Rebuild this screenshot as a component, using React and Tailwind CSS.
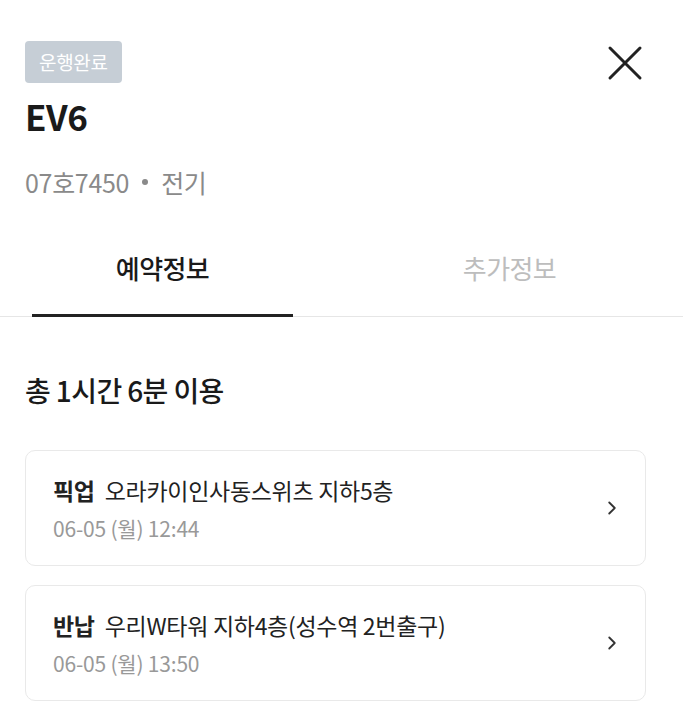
import { ChevronRight } from "lucide-react";

const font = { fontFamily: '"Noto Sans CJK KR", "Noto Sans", sans-serif' };

function PlaceCard({ label, place, time }) {
  return (
    <div className="flex items-center justify-between rounded-[10px] border border-[#e9e9e9] h-[116px] pl-[27px] pr-[22px]">
      <div className="flex flex-col">
        <div className="flex items-center text-[23px] leading-[30px] text-[#222] tracking-[-0.3px]">
          <span className="font-bold mr-[10px]">{label}</span>
          <span>{place}</span>
        </div>
        <div className="mt-[10px] text-[21px] leading-[26px] text-[#999] tracking-[-0.2px]">{time}</div>
      </div>
      <ChevronRight className="w-[22px] h-[22px] text-[#333]" strokeWidth={2} />
    </div>
  );
}

export default function App() {
  return (
    <div className="w-[683px] h-[721px] bg-white overflow-hidden" style={font}>
      {/* Header */}
      <div className="px-[25px] pt-[41px]">
        <div className="flex items-start justify-between">
          <span className="inline-flex items-center h-[42px] px-[14px] rounded-[4px] bg-[#c6ced6] text-white text-[19px] tracking-[-0.3px]">
            운행완료
          </span>
          <svg width="36" height="36" viewBox="0 0 36 36" className="mt-[4px] mr-[15px]">
            <path d="M3 3 L33 33 M33 3 L3 33" stroke="#222" strokeWidth="3" strokeLinecap="round" />
          </svg>
        </div>
        <div className="mt-[12px] text-[35px] leading-[42px] font-bold text-[#1a1a1a] tracking-[-0.5px]">EV6</div>
        <div className="mt-[29px] flex items-center text-[25px] leading-[32px] text-[#8a8a8a] tracking-[-0.3px]">
          <span>07호7450</span>
          <span className="mx-[13px] w-[6px] h-[6px] rounded-full bg-[#8a8a8a]" />
          <span>전기</span>
        </div>
      </div>

      {/* Tabs */}
      <div className="mt-[53px] flex border-b border-[#e6e6e6]">
        <div className="ml-[32px] w-[261px] flex flex-col items-center">
          <span className="text-[26px] leading-[34px] text-[#1a1a1a] font-medium tracking-[-0.6px]">예약정보</span>
          <span className="mt-[29px] w-full h-[3px] bg-[#222] -mb-px" />
        </div>
        <div className="ml-[86px] w-[261px] flex flex-col items-center">
          <span className="text-[26px] leading-[34px] text-[#bdbdbd] tracking-[-0.6px]">추가정보</span>
        </div>
      </div>

      {/* Content */}
      <div className="px-[25px] pt-[55px]">
        <div className="text-[28px] leading-[36px] font-medium text-[#1a1a1a] tracking-[-0.6px]">총 1시간 6분 이용</div>
        <div className="mt-[42px] mr-[12px] flex flex-col gap-[19px]">
          <PlaceCard label="픽업" place="오라카이인사동스위츠 지하5층" time="06-05 (월) 12:44" />
          <PlaceCard label="반납" place="우리W타워 지하4층(성수역 2번출구)" time="06-05 (월) 13:50" />
        </div>
      </div>
    </div>
  );
}
